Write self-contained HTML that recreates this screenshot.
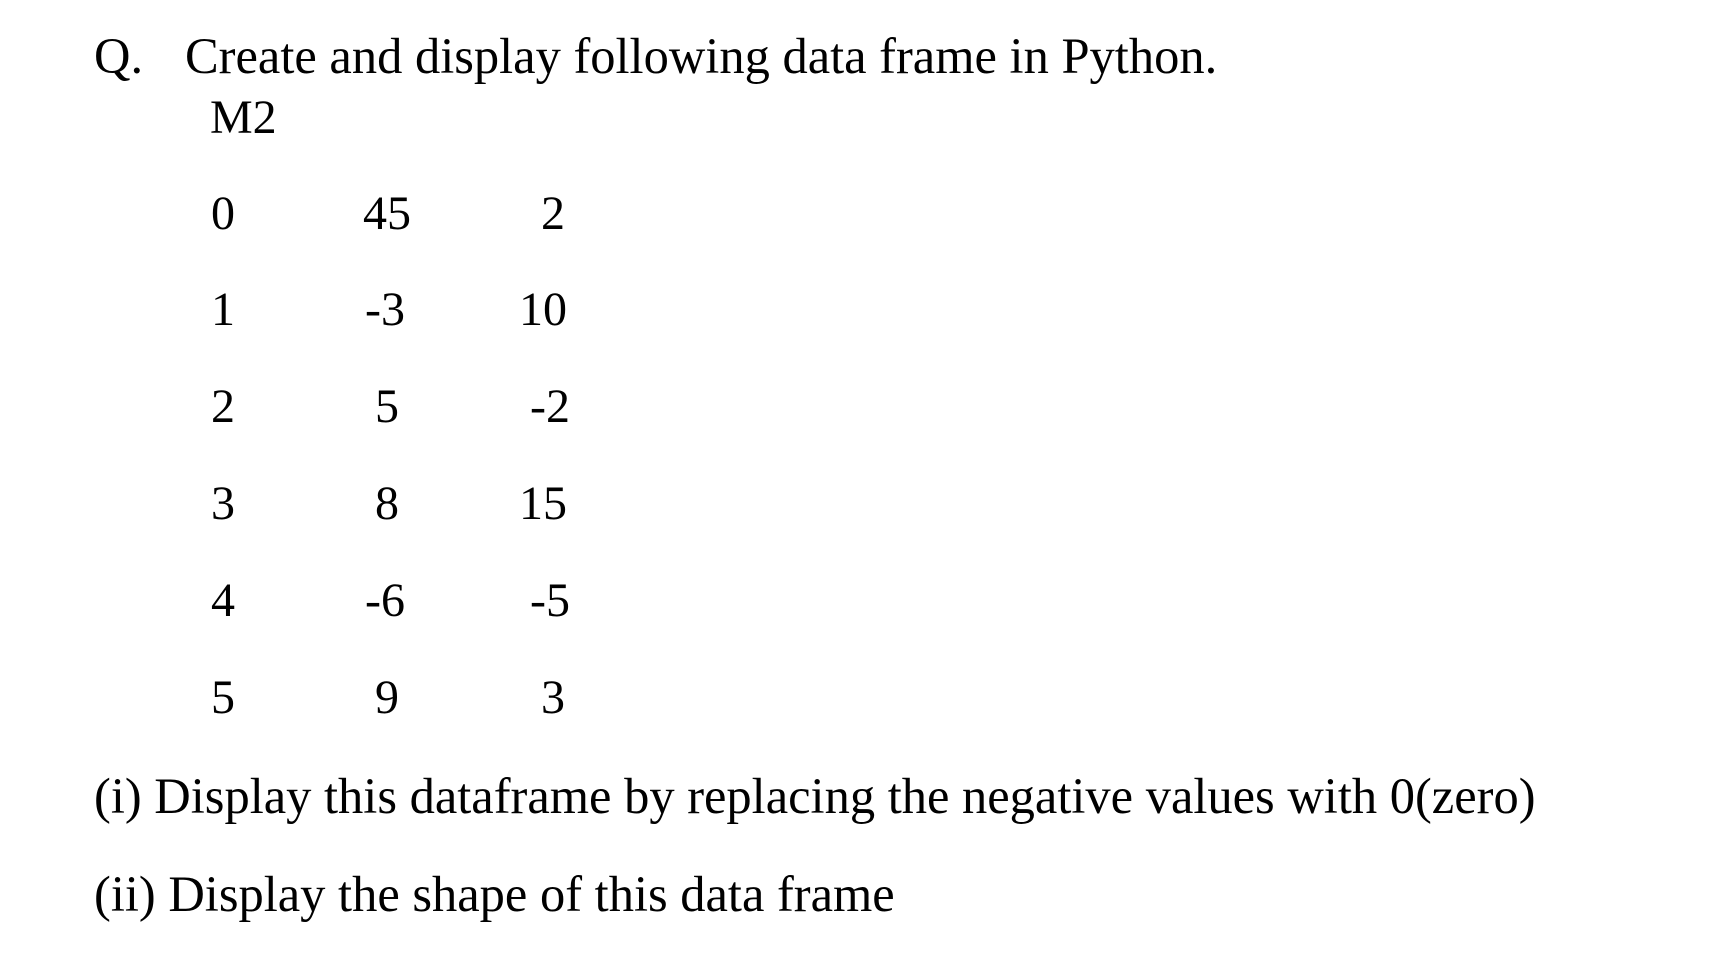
<!DOCTYPE html>
<html><head><meta charset="utf-8"><style>
body{margin:0;width:1724px;height:974px;background:#fff;position:relative;overflow:hidden;font-family:"Liberation Serif",serif;color:#000}
.t{position:absolute;white-space:nowrap;line-height:1}
.c{position:absolute;white-space:nowrap;line-height:1;transform:translateX(-50%);font-size:48px}
</style></head><body>
<div class="t" style="left:94px;top:31px;font-size:50.5px">Q.</div>
<div class="t" style="left:185px;top:31px;font-size:50.5px">Create and display following data frame in Python.</div>
<div class="t" style="left:210px;top:94px;font-size:48px">M2</div>

<div class="c" style="left:223px;top:190px">0</div><div class="c" style="left:387px;top:190px">45</div><div class="c" style="left:553px;top:190px">2</div>
<div class="c" style="left:223px;top:286px">1</div><div class="c" style="left:385px;top:286px">-3</div><div class="c" style="left:543px;top:286px">10</div>
<div class="c" style="left:223px;top:383px">2</div><div class="c" style="left:387px;top:383px">5</div><div class="c" style="left:550px;top:383px">-2</div>
<div class="c" style="left:223px;top:480px">3</div><div class="c" style="left:387px;top:480px">8</div><div class="c" style="left:543px;top:480px">15</div>
<div class="c" style="left:223px;top:577px">4</div><div class="c" style="left:385px;top:577px">-6</div><div class="c" style="left:550px;top:577px">-5</div>
<div class="c" style="left:223px;top:674px">5</div><div class="c" style="left:387px;top:674px">9</div><div class="c" style="left:553px;top:674px">3</div>

<div class="t" style="left:94px;top:771px;font-size:50.5px">(i) Display this dataframe by replacing the negative values with 0(zero)</div>
<div class="t" style="left:94px;top:869px;font-size:50.5px">(ii) Display the shape of this data frame</div>
</body></html>
